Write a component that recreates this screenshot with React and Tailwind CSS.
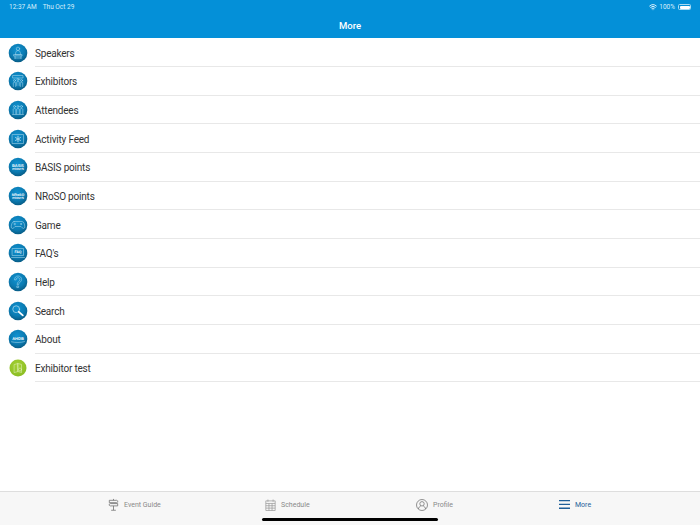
import { Wifi } from 'lucide-react';

const sans = "font-['Roboto','Liberation_Sans',sans-serif]";

/* round app icon, with the line drawing passed as children */
function RoundIcon({ id, green, children }) {
  return (
    <svg width="20" height="20" viewBox="0 0 20 20" className="shrink-0" textRendering="geometricPrecision">
      <defs>
        <radialGradient id={id} cx="0.45" cy="0.35" r="0.75">
          <stop offset="0" stopColor={green ? '#a4d034' : '#1093d2'} />
          <stop offset="0.55" stopColor={green ? '#95c52a' : '#0b7bb2'} />
          <stop offset="1" stopColor={green ? '#86b81f' : '#064f73'} />
        </radialGradient>
      </defs>
      <circle cx="10" cy="10" r={green ? 8.500 : 9.300} fill={`url(#${id})`} />
      <g fill="none" stroke="#a9d8ec" strokeWidth="0.55" strokeLinecap="round" strokeLinejoin="round">
        {children}
      </g>
    </svg>
  );
}

function IconText({ top, bottom, topSize }) {
  return (
    <g fill="#fff" stroke="none" fontFamily="Liberation Sans, sans-serif" fontWeight="700" textAnchor="middle">
      <text x="10" y="9.800" fontSize={topSize}>{top}</text>
      <text x="10" y="13.200" fontSize="3.100">{bottom}</text>
    </g>
  );
}

const items = [
  {
    label: 'Speakers',
    icon: (
      <>
        <circle cx="10" cy="5.800" r="1.700" />
        <path d="M7.500 11.500c0-3 1-4 2.500-4s2.500 1 2.500 4z" />
        <path d="M6 11.500h8v1.500H6zM7 13v2.500M13 13v2.500M7 15h6" />
      </>
    ),
  },
  {
    label: 'Exhibitors',
    icon: (
      <>
        <path d="M5 4.500h10v2.500H5z" />
        <circle cx="6.500" cy="9.500" r="1" />
        <circle cx="13.500" cy="9.500" r="1" />
        <circle cx="10" cy="8.500" r="1" />
        <path d="M5.300 15.500v-3.500c0-1 2.400-1 2.400 0v3.500M12.300 15.500v-3.500c0-1 2.400-1 2.400 0v3.500M8.800 14.500v-3.500c0-1 2.400-1 2.400 0v3.500" />
      </>
    ),
  },
  {
    label: 'Attendees',
    icon: (
      <>
        <circle cx="6.500" cy="6.500" r="1" />
        <circle cx="10" cy="6.500" r="1" />
        <circle cx="13.500" cy="6.500" r="1" />
        <path d="M5.200 14V9.300c0-1 2.600-1 2.600 0V14M8.700 14V9.300c0-1 2.600-1 2.600 0V14M12.200 14V9.300c0-1 2.600-1 2.600 0V14M4.500 14.500h11" />
      </>
    ),
  },
  {
    label: 'Activity Feed',
    icon: (
      <>
        <path d="M4.500 5.500h11v9h-11z" />
        <path d="M10 7.200v5.600M7.600 8.600l4.800 2.800M12.400 8.600l-4.800 2.800" strokeWidth="1" />
      </>
    ),
  },
  { label: 'BASIS points', icon: <IconText top="BASIS" bottom="POINTS" topSize="3.900" /> },
  { label: 'NRoSO points', icon: <IconText top="NRoSO" bottom="POINTS" topSize="3.600" /> },
  {
    label: 'Game',
    icon: (
      <>
        <path d="M6 6.500h8c1.600 0 2.800 2.800 2.800 5.500 0 1.600-1.700 2-2.600.8L13 11.500H7l-1.200 1.300C4.900 14 3.200 13.600 3.200 12c0-2.700 1.200-5.500 2.800-5.500z" />
        <path d="M5.900 9h1.800M6.800 8.100v1.800" />
        <circle cx="13" cy="9" r="0.600" />
      </>
    ),
  },
  {
    label: "FAQ's",
    icon: (
      <>
        <path d="M4.500 5.500h11v7h-11zM3.500 14.500h13" />
        <text x="10" y="10.300" fontSize="3.500" fontWeight="700" fontFamily="Liberation Sans, sans-serif" textAnchor="middle" fill="#fff" stroke="none">
          FAQ
        </text>
      </>
    ),
  },
  {
    label: 'Help',
    icon: <path d="M6.500 7.500C6.500 5.500 8 4 10 4s3.600 1.500 3.600 3.400c0 2.800-3 2.800-3 5.300h-1.500c0-3.200 2.800-3.200 2.800-5.200 0-1-.9-1.800-1.900-1.800S8.100 6.500 8.100 7.500zM9.200 14h1.400v1.500H9.200z" />,
  },
  {
    label: 'Search',
    icon: (
      <>
        <circle cx="8.200" cy="8.200" r="3.400" strokeWidth="0.800" />
        <path d="M10.800 10.800l4 3.600" stroke="#fff" strokeWidth="1.800" />
      </>
    ),
  },
  {
    label: 'About',
    icon: (
      <>
        <text x="10" y="10.800" fontSize="4" fontWeight="700" fontFamily="Liberation Sans, sans-serif" textAnchor="middle" fill="#fff" stroke="none">
          AHDB
        </text>
        <path d="M3.500 12.800c4 1 9 1 13-.2" />
      </>
    ),
  },
  {
    label: 'Exhibitor test',
    green: true,
    icon: (
      <>
        <path d="M6.500 6.500L10 5.500v8l-3.500 1zM10 5.500l3.500 1v8l-3.500-1z" stroke="#dff0b8" />
        <circle cx="12" cy="11.500" r="1.500" stroke="#dff0b8" />
      </>
    ),
  },
];

const tabs = [
  {
    label: 'Event Guide',
    width: 'w-[157px]',
    icon: (
      <svg width="11" height="13" viewBox="0 0 11 14" fill="none" stroke="#777" strokeWidth="0.9">
        <path d="M1 2.500h8l1.500 1.300L9 5H1zM10 6H2L.5 7.200 2 8.500h8zM5.500 1v1.500M5.500 8.500V13M3 13.200h5" />
      </svg>
    ),
  },
  {
    label: 'Schedule',
    width: 'w-[151px]',
    icon: (
      <svg width="11" height="12" viewBox="0 0 12 13" fill="none" stroke="#999" strokeWidth="0.8">
        <path d="M.9 2h10.200v10.500H.9zM.9 4.800h10.200M.9 7.300h10.200M.9 9.900h10.200M4.300 4.800v7.700M7.700 4.800v7.700M3.200.5v2.500M8.800.5v2.500" />
      </svg>
    ),
  },
  {
    label: 'Profile',
    width: 'w-[143px]',
    icon: (
      <svg width="12" height="12" viewBox="0 0 12 12" fill="none" stroke="#777" strokeWidth="0.8">
        <circle cx="6" cy="6" r="5.500" />
        <circle cx="6" cy="4.800" r="2.200" />
        <path d="M2.400 10c.3-1.800 1.500-2.700 2.400-3M9.600 10c-.3-1.800-1.500-2.700-2.400-3" />
      </svg>
    ),
  },
  {
    label: 'More',
    active: true,
    icon: (
      <svg width="11" height="9" viewBox="0 0 11 9" fill="#1f5f99">
        <path d="M0 0h11v1.300H0zM0 3.800h11v1.300H0zM0 7.600h11v1.300H0z" />
      </svg>
    ),
  },
];

export default function App() {
  return (
    <div className={`relative flex h-[525px] w-[700px] flex-col overflow-hidden bg-white ${sans}`}>
      {/* header with status bar */}
      <header className="h-[38.400px] shrink-0 bg-[#0490d8] text-white">
        <div className="flex h-[14px] items-center justify-between pl-[9px] pr-[9px] text-[6.500px] leading-none text-[#d8effa]">
          <div className="flex gap-[6px]">
            <span>12:37 AM</span>
            <span>Thu Oct 29</span>
          </div>
          <div className="flex items-center gap-[2px]">
            <Wifi size={8} strokeWidth={3} />
            <span>100%</span>
            <div className="ml-[1px] flex h-[6px] w-[13px] rounded-[1.500px] border border-[#a8dbf3] p-[0.500px]">
              <div className="flex-1 rounded-[1px] bg-white" />
            </div>
          </div>
        </div>
        <div className="pt-[6px] text-center text-[9.500px] font-medium leading-[12px]">More</div>
      </header>

      {/* menu rows */}
      <main className="flex-1">
        {items.map((item, i) => (
          <div key={item.label} className="flex h-[28.670px] items-center pl-[8px]">
            <RoundIcon id={`g${i}`} green={item.green}>
              {item.icon}
            </RoundIcon>
            <div className="ml-[7px] flex h-full flex-1 items-center border-b border-[#e8e8e8] pt-[2px] text-[10px] tracking-[-0.2px] text-[#333]">
              {item.label}
            </div>
          </div>
        ))}
      </main>

      {/* tab bar */}
      <footer className="flex h-[34px] shrink-0 items-start border-t border-[#dedede] bg-[#f7f7f7] pl-[108px] pt-[5.500px]">
        {tabs.map((tab) => (
          <div key={tab.label} className={`flex h-[14px] items-center gap-[5px] ${tab.width || ''}`}>
            {tab.icon}
            <span className={`pt-[1px] text-[7px] ${tab.active ? 'text-[#1f5f99]' : 'text-[#8a8a8a]'}`}>{tab.label}</span>
          </div>
        ))}
      </footer>

      {/* home indicator */}
      <div className="absolute bottom-[4px] left-[262px] h-[3px] w-[176px] rounded-full bg-black" />
    </div>
  );
}
